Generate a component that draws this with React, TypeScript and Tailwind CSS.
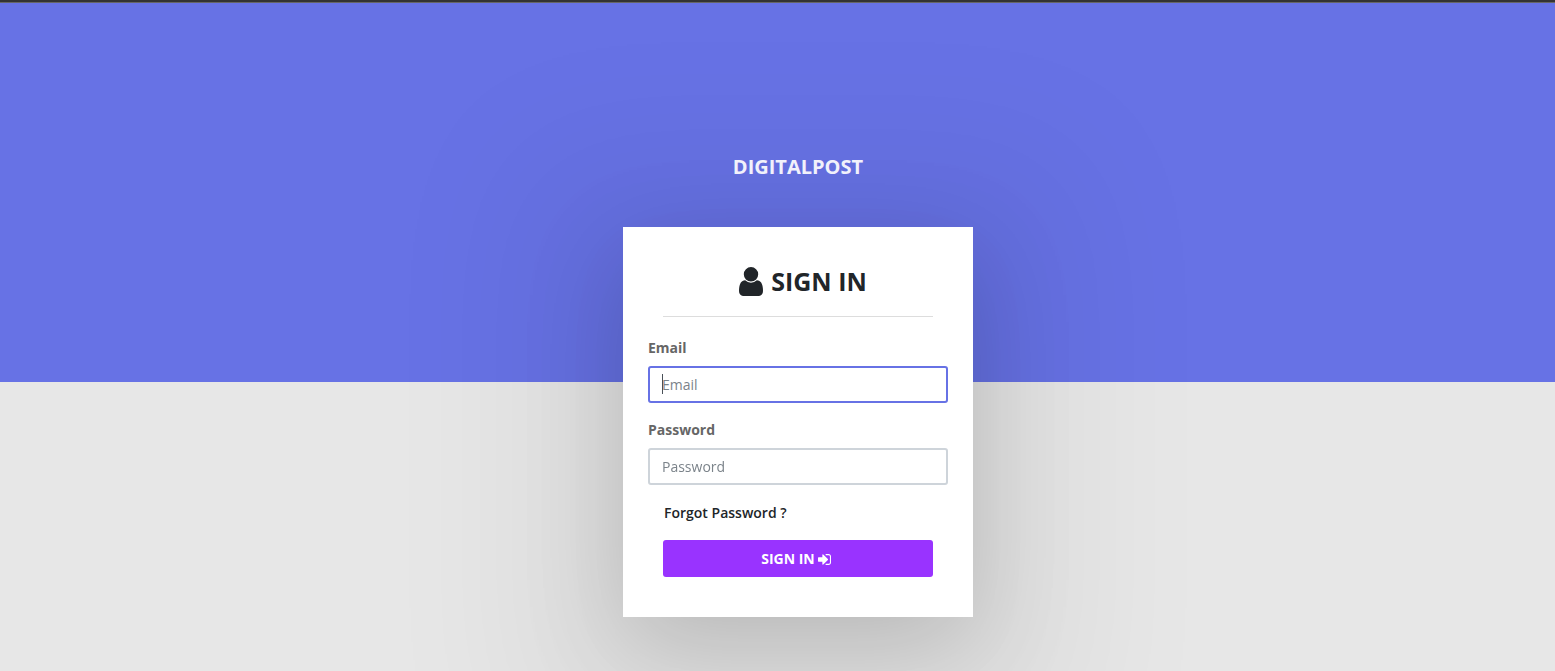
import type { ReactNode } from "react";

function UserIcon() {
  return (
    <svg viewBox="256 128 1280 1536" className="h-[29px] w-6" fill="currentColor" aria-hidden="true">
      <path d="M1536 1399q0 109-62.5 187t-150.5 78h-854q-88 0-150.5-78t-62.5-187q0-85 8.5-160.5t31.5-152 58.5-131 94-89 134.5-34.5q131 128 313 128t313-128q76 0 134.5 34.5t94 89 58.5 131 31.5 152 8.5 160.5zm-256-887q0 159-112.5 271.5t-271.5 112.5-271.5-112.5-112.5-271.5 112.5-271.5 271.5-112.5 271.5 112.5 112.5 271.5z" />
    </svg>
  );
}

function SignInIcon() {
  return (
    <svg viewBox="128 256 1536 1280" className="mt-0.5 h-[11px] w-[13px]" fill="currentColor" aria-hidden="true">
      <path d="M1312 896q0 26-19 45l-544 544q-19 19-45 19t-45-19-19-45v-288h-448q-26 0-45-19t-19-45v-384q0-26 19-45t45-19h448v-288q0-26 19-45t45-19 45 19l544 544q19 19 19 45zm352-352v704q0 119-84.5 203.5t-203.5 84.5h-320q-13 0-22.5-9.5t-9.5-22.5q0-4-1-20t-.5-26.5 3-23.5 10-19.5 20.5-6.5h320q66 0 113-47t47-113v-704q0-66-47-113t-113-47h-312l-11.5-1-11.5-3-8-5.5-7-9-2-13.5q0-4-1-20t-.5-26.5 3-23.5 10-19.5 20.5-6.5h320q119 0 203.5 84.5t84.5 203.5z" />
    </svg>
  );
}

function Field({ id, label, children }: { id: string; label: string; children: ReactNode }) {
  return (
    <div className="mb-4 flex flex-col">
      <label htmlFor={id} className="mb-2 text-sm leading-[21px] font-bold text-[#666666]">
        {label}
      </label>
      <div className="relative flex">{children}</div>
    </div>
  );
}

const inputClass =
  "peer h-[37px] w-full rounded-[3px] border-2 border-[#ced4da] bg-white px-3 text-sm text-[#495057] outline-none placeholder:text-[#7b838a] placeholder-shown:caret-transparent focus:border-[#6772e5]";

/* Caret shown over the placeholder while an empty field has focus */
const caretClass =
  "pointer-events-none absolute top-2 left-3.5 hidden h-5 w-px bg-[#495057] peer-[:placeholder-shown:focus]:block";

export default function App() {
  return (
    <div className="flex min-h-screen flex-col overflow-hidden border-t-2 border-[#333333] bg-[#e7e7e7] bg-[linear-gradient(#666666_1px,#6772e5_1px,#6772e5_380px,transparent_380px)] font-['Open_Sans',sans-serif] text-[#212529]">
      <main className="flex flex-col items-center pt-[148px] pb-[54px] pl-[41px]">
        <section className="order-2 w-[350px] bg-white px-[25px] py-10 shadow-[0_29px_148px_103px_rgba(0,0,0,0.05),0_29px_95px_0_rgba(0,0,0,0.16)]">
          <form onSubmit={(e) => e.preventDefault()}>
            <h2 className="mx-[15px] mb-5 flex h-[50px] items-center justify-center gap-2 border-b border-[#dddddd] pb-5 pl-2.5 text-[25px] leading-[29px] font-bold">
              <UserIcon />
              SIGN IN
            </h2>
            <Field id="email" label="Email">
              <input id="email" type="email" placeholder="Email" autoFocus className={inputClass} />
              <span className={caretClass} />
            </Field>
            <Field id="password" label="Password">
              <input id="password" type="password" placeholder="Password" className={inputClass} />
              <span className={caretClass} />
            </Field>
            <div className="mx-[15px] flex flex-col">
              <a href="#forgot" className="mb-4 self-start pl-px text-sm leading-[23px] font-semibold">
                Forgot Password ?
              </a>
              <button
                type="submit"
                className="flex h-[37px] items-center justify-center gap-[3px] rounded-[3px] bg-[#9933ff] pr-1 text-sm font-bold text-white"
              >
                SIGN IN
                <SignInIcon />
              </button>
            </div>
          </form>
        </section>
        <h1 className="relative order-1 mb-11 text-xl leading-[33px] font-bold text-[#f1f1fb]">DIGITALPOST</h1>
      </main>
    </div>
  );
}
